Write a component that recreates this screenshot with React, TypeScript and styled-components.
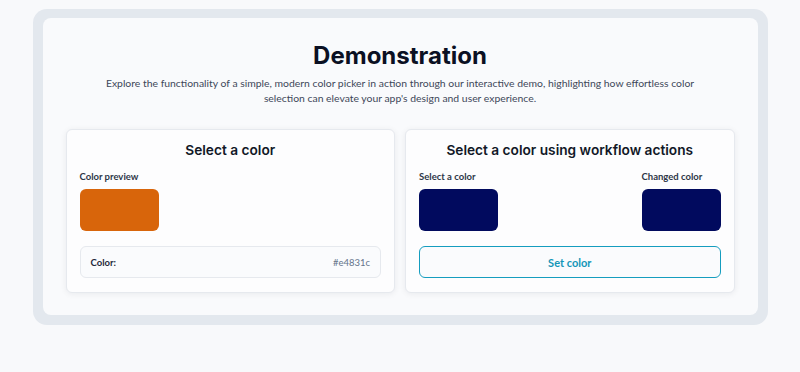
import React from "react";
import styled, { createGlobalStyle } from "styled-components";

const Global = createGlobalStyle`
  html, body { margin: 0; padding: 0; background: #f8f9fb; }
  body { font-family: "Lato", "Inter", sans-serif; }
  * { box-sizing: border-box; }
`;

const Page = styled.div`
  width: 800px;
  height: 372px;
  padding-top: 9px;
  background: #f8f9fb;
`;

const Frame = styled.div`
  width: 735px;
  margin: 0 auto;
  padding: 9px 10px 10px;
  background: #e3e8ee;
  border-radius: 14px;
`;

const Panel = styled.div`
  background: #f9fafc;
  border-radius: 8px;
  padding: 23px 23px 22px;
  display: flex;
  flex-direction: column;
  align-items: center;
`;

const Title = styled.h1`
  margin: 0;
  font-family: "Inter", sans-serif;
  font-weight: 700;
  font-size: 24px;
  line-height: 30px;
  color: #0b1023;
`;

const Lead = styled.p`
  margin: 5px 0 0;
  max-width: 592px;
  text-align: center;
  font-family: "Lato", sans-serif;
  font-size: 10.4px;
  line-height: 14.7px;
  color: #3d4759;
`;

const Cards = styled.div`
  margin-top: 24px;
  width: 100%;
  display: grid;
  grid-template-columns: 1fr 1fr;
  gap: 10px;
`;

const Card = styled.div`
  background: #fdfdfe;
  border: 1px solid #e6e9ee;
  border-radius: 6px;
  box-shadow: 0 1px 6px rgba(15, 23, 42, 0.07);
  padding: 12px 13px 14px;
  display: flex;
  flex-direction: column;
`;

const CardTitle = styled.h2`
  margin: 0;
  text-align: center;
  font-family: "Inter", sans-serif;
  font-weight: 600;
  font-size: 13.7px;
  line-height: 17px;
  color: #111827;
`;

const Swatches = styled.div`
  margin-top: 12px;
  display: flex;
  justify-content: space-between;
`;

const Field = styled.div`
  display: flex;
  flex-direction: column;
  gap: 6px;
`;

const Label = styled.span`
  font-family: "Lato", sans-serif;
  font-weight: 700;
  font-size: 9.5px;
  line-height: 12px;
  color: #2d3748;
`;

const Swatch = styled.div<{ $color: string }>`
  width: 79px;
  height: 42px;
  border-radius: 6px;
  background: ${(p) => p.$color};
`;

const ValueRow = styled.div`
  margin-top: 15px;
  height: 32px;
  padding: 0 10px;
  display: flex;
  align-items: center;
  justify-content: space-between;
  border: 1px solid #e6e9ee;
  border-radius: 6px;
  background: #fafbfd;
`;

const RowKey = styled.span`
  font-family: "Lato", sans-serif;
  font-weight: 700;
  font-size: 9.5px;
  color: #1e293b;
`;

const RowValue = styled.span`
  font-family: "Lato", sans-serif;
  font-size: 9.5px;
  color: #64748b;
`;

const Button = styled.button`
  margin-top: 15px;
  height: 32px;
  border: 1.5px solid #159dbf;
  border-radius: 6px;
  background: #fafbfd;
  color: #1496b8;
  font-family: "Lato", sans-serif;
  font-weight: 700;
  font-size: 11px;
  cursor: pointer;
`;

export default function App() {
  return (
    <Page>
      <Global />
      <Frame>
        <Panel>
          <Title>Demonstration</Title>
          <Lead>
            Explore the functionality of a simple, modern color picker in action through our interactive demo, highlighting how effortless color selection can elevate your app's design and user experience.
          </Lead>
          <Cards>
            <Card>
              <CardTitle>Select a color</CardTitle>
              <Swatches>
                <Field>
                  <Label>Color preview</Label>
                  <Swatch $color="#d8650b" />
                </Field>
              </Swatches>
              <ValueRow>
                <RowKey>Color:</RowKey>
                <RowValue>#e4831c</RowValue>
              </ValueRow>
            </Card>
            <Card>
              <CardTitle>Select a color using workflow actions</CardTitle>
              <Swatches>
                <Field>
                  <Label>Select a color</Label>
                  <Swatch $color="#010a5e" />
                </Field>
                <Field>
                  <Label>Changed color</Label>
                  <Swatch $color="#010a5e" />
                </Field>
              </Swatches>
              <Button>Set color</Button>
            </Card>
          </Cards>
        </Panel>
      </Frame>
    </Page>
  );
}
